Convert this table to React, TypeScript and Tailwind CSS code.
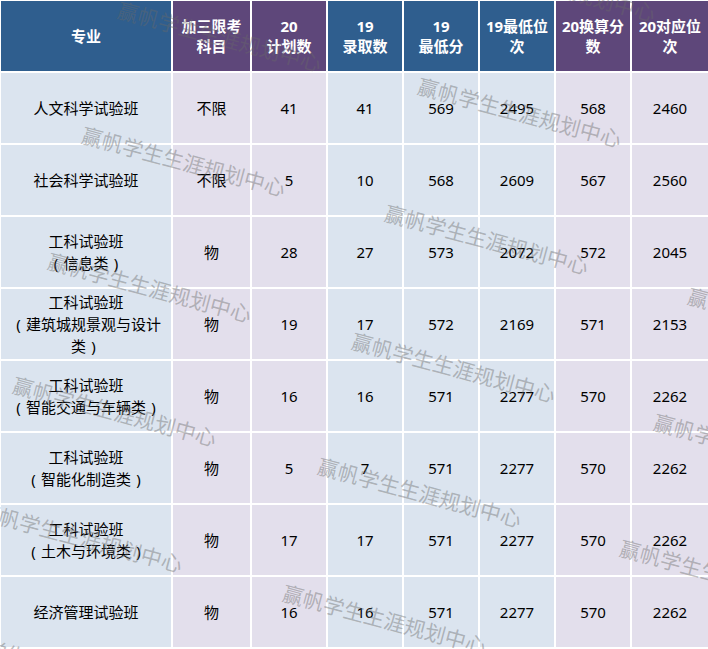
const HEAD_BLUE = "bg-[#2f5e8e]";
const HEAD_PURPLE = "bg-[#5e477a]";
const BODY_BLUE = "bg-[#dbe4ef]";
const BODY_PURPLE = "bg-[#e3dfec]";

// 列颜色：true = 蓝色组
const isBlue = [true, false, false, true, true, true, false, false];

const headers: string[][] = [
  ["专业"],
  ["加三限考", "科目"],
  ["20", "计划数"],
  ["19", "录取数"],
  ["19", "最低分"],
  ["19最低位", "次"],
  ["20换算分", "数"],
  ["20对应位", "次"],
];

const rows: { name: string[]; cells: string[] }[] = [
  { name: ["人文科学试验班"], cells: ["不限", "41", "41", "569", "2495", "568", "2460"] },
  { name: ["社会科学试验班"], cells: ["不限", "5", "10", "568", "2609", "567", "2560"] },
  { name: ["工科试验班", "（信息类）"], cells: ["物", "28", "27", "573", "2072", "572", "2045"] },
  {
    name: ["工科试验班", "（建筑城规景观与设计", "类）"],
    cells: ["物", "19", "17", "572", "2169", "571", "2153"],
  },
  { name: ["工科试验班", "（智能交通与车辆类）"], cells: ["物", "16", "16", "571", "2277", "570", "2262"] },
  { name: ["工科试验班", "（智能化制造类）"], cells: ["物", "5", "7", "571", "2277", "570", "2262"] },
  { name: ["工科试验班", "（土木与环境类）"], cells: ["物", "17", "17", "571", "2277", "570", "2262"] },
  { name: ["经济管理试验班"], cells: ["物", "16", "16", "571", "2277", "570", "2262"] },
];

const marks = [
  "left-[121px] top-[-1px]",
  "left-[85px] top-[124px]",
  "left-[51px] top-[250px]",
  "left-[16px] top-[374px]",
  "left-[-18px] top-[500px]",
  "left-[-52px] top-[626px]",
  "left-[455px] top-[-51px]",
  "left-[421px] top-[75px]",
  "left-[388px] top-[202px]",
  "left-[355px] top-[330px]",
  "left-[321px] top-[455px]",
  "left-[286px] top-[582px]",
  "left-[691px] top-[285px]",
  "left-[657px] top-[411px]",
  "left-[623px] top-[537px]",
];

// 全角括号单独占一格，字形居中
function NameLine({ text }: { text: string }) {
  const parts = text.split(/([（）])/).filter(Boolean);
  return (
    <span className="whitespace-nowrap">
      {parts.map((p, i) =>
        p === "（" || p === "）" ? (
          <span key={i} className="inline-block w-[15px] text-center">
            {p === "（" ? "(" : ")"}
          </span>
        ) : (
          <span key={i}>{p}</span>
        ),
      )}
    </span>
  );
}

export default function App() {
  return (
    <div className="relative h-[649px] w-[708px] overflow-hidden bg-white font-['Noto_Sans','Noto_Sans_CJK_SC',sans-serif]">
      <div className="grid grid-cols-[170px_77px_74px_74px_74px_74px_74px_76px] auto-rows-[70px] gap-[2px] pl-[1px] pt-[1px] pb-[2px]">
        {headers.map((lines, i) => (
          <div
            key={i}
            className={`flex flex-col items-center justify-center text-center text-[15px] font-bold leading-[20px] text-white ${
              isBlue[i] ? HEAD_BLUE : HEAD_PURPLE
            }`}
          >
            {lines.map((l) => (
              <span key={l}>{l}</span>
            ))}
          </div>
        ))}
        {rows.map((r, ri) => (
          <>
            <div
              key={`n${ri}`}
              className={`flex flex-col items-center justify-center text-center text-[15px] leading-[22px] text-black ${BODY_BLUE}`}
            >
              {r.name.map((l) => (
                <NameLine key={l} text={l} />
              ))}
            </div>
            {r.cells.map((c, ci) => (
              <div
                key={`c${ri}-${ci}`}
                className={`flex items-center justify-center text-[15px] text-black ${
                  isBlue[ci + 1] ? BODY_BLUE : BODY_PURPLE
                }`}
              >
                {c}
              </div>
            ))}
          </>
        ))}
      </div>

      {/* 水印 */}
      <div className="pointer-events-none absolute inset-0">
        {marks.map((pos) => (
          <span
            key={pos}
            className={`absolute ${pos} origin-top-left rotate-[15deg] whitespace-nowrap font-['Noto_Sans_CJK_SC',sans-serif] text-[21px] leading-none text-[rgba(105,105,105,0.42)]`}
          >
            赢帆学生生涯规划中心
          </span>
        ))}
      </div>
    </div>
  );
}
